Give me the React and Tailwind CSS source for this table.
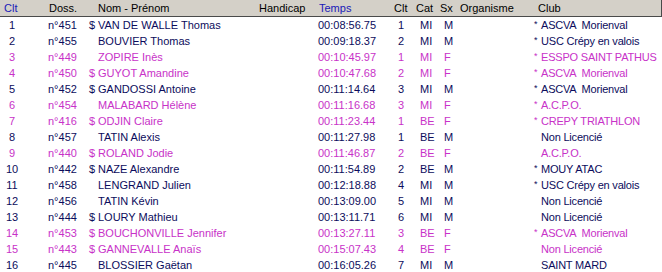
import React from "react";

const rows = [
  ["1", "n°451", "$", "VAN DE WALLE Thomas", "00:08:56.75", "1", "MI", "M", "*", "ASCVA  Morienval", false],
  ["2", "n°455", "", "BOUVIER Thomas", "00:09:18.37", "2", "MI", "M", "*", "USC Crépy en valois", false],
  ["3", "n°449", "", "ZOPIRE Inès", "00:10:45.97", "1", "MI", "F", "*", "ESSPO SAINT PATHUS", true],
  ["4", "n°450", "$", "GUYOT Amandine", "00:10:47.68", "2", "MI", "F", "*", "ASCVA  Morienval", true],
  ["5", "n°452", "$", "GANDOSSI Antoine", "00:11:14.64", "3", "MI", "M", "*", "ASCVA  Morienval", false],
  ["6", "n°454", "", "MALABARD Hélène", "00:11:16.68", "3", "MI", "F", "*", "A.C.P.O.", true],
  ["7", "n°416", "$", "ODJIN Claire", "00:11:23.44", "1", "BE", "F", "*", "CREPY TRIATHLON", true],
  ["8", "n°457", "", "TATIN Alexis", "00:11:27.98", "1", "BE", "M", "", "Non Licencié", false],
  ["9", "n°440", "$", "ROLAND Jodie", "00:11:46.87", "2", "BE", "F", "", "A.C.P.O.", true],
  ["10", "n°442", "$", "NAZE Alexandre", "00:11:54.89", "2", "BE", "M", "*", "MOUY ATAC", false],
  ["11", "n°458", "", "LENGRAND Julien", "00:12:18.88", "4", "MI", "M", "*", "USC Crépy en valois", false],
  ["12", "n°456", "", "TATIN Kévin", "00:13:09.00", "5", "MI", "M", "", "Non Licencié", false],
  ["13", "n°444", "$", "LOURY Mathieu", "00:13:11.71", "6", "MI", "M", "", "Non Licencié", false],
  ["14", "n°453", "$", "BOUCHONVILLE Jennifer", "00:13:27.11", "3", "BE", "F", "*", "ASCVA  Morienval", true],
  ["15", "n°443", "$", "GANNEVALLE Anaïs", "00:15:07.43", "4", "BE", "F", "", "Non Licencié", true],
  ["16", "n°445", "", "BLOSSIER Gaëtan", "00:16:05.26", "7", "MI", "M", "", "SAINT MARD", false],
];

const Row = ({ r }) => {
  const [clt, doss, dollar, name, time, clt2, cat, sx, star, club, pink] = r;
  return (
    <div className={`flex h-[16px] items-center whitespace-pre ${pink ? "text-[#c832c8]" : "text-[#0c0c5c]"}`}>
      <span className="w-[24px] text-center">{clt}</span>
      <span className="w-[24px]" />
      <span className="w-[41px]">{doss}</span>
      <span className="w-[9px]">{dollar}</span>
      <span className="w-[220px]">{name}</span>
      <span className="w-[72px]">{time}</span>
      <span className="w-[22px] text-center">{clt2}</span>
      <span className="w-[8px]" />
      <span className="w-[24px]">{cat}</span>
      <span className="w-[19px]">{sx}</span>
      <span className="w-[71px]" />
      <span className="w-[7px] self-start pt-[1px] text-[9px] leading-[12px]">{star}</span>
      <span className="tracking-[-0.2px]">{club}</span>
    </div>
  );
};

export default function App() {
  return (
    <div className="w-[662px] h-[272px] overflow-hidden bg-white text-[11px] leading-[16px]" style={{ fontFamily: '"Liberation Sans", Arial, sans-serif' }}>
      <div className="flex h-[17px] items-center bg-[#d4d0c8] border-b border-[#4a4a4a] border-r text-black whitespace-pre">
        <span className="w-[48px] pl-[4px] text-[#1a1ab8]">Clt</span>
        <span className="w-[50px] pl-[1px]">Doss.</span>
        <span className="w-[161px]">Nom - Prénom</span>
        <span className="w-[60px]">Handicap</span>
        <span className="w-[72px] text-[#1a1ab8]">Temps</span>
        <span className="w-[25px] pl-[3px]">Clt</span>
        <span className="w-[24px]">Cat</span>
        <span className="w-[20px]">Sx</span>
        <span className="w-[78px]">Organisme</span>
        <span>Club</span>
      </div>
      {rows.map((r) => (
        <Row key={r[0]} r={r} />
      ))}
    </div>
  );
}
